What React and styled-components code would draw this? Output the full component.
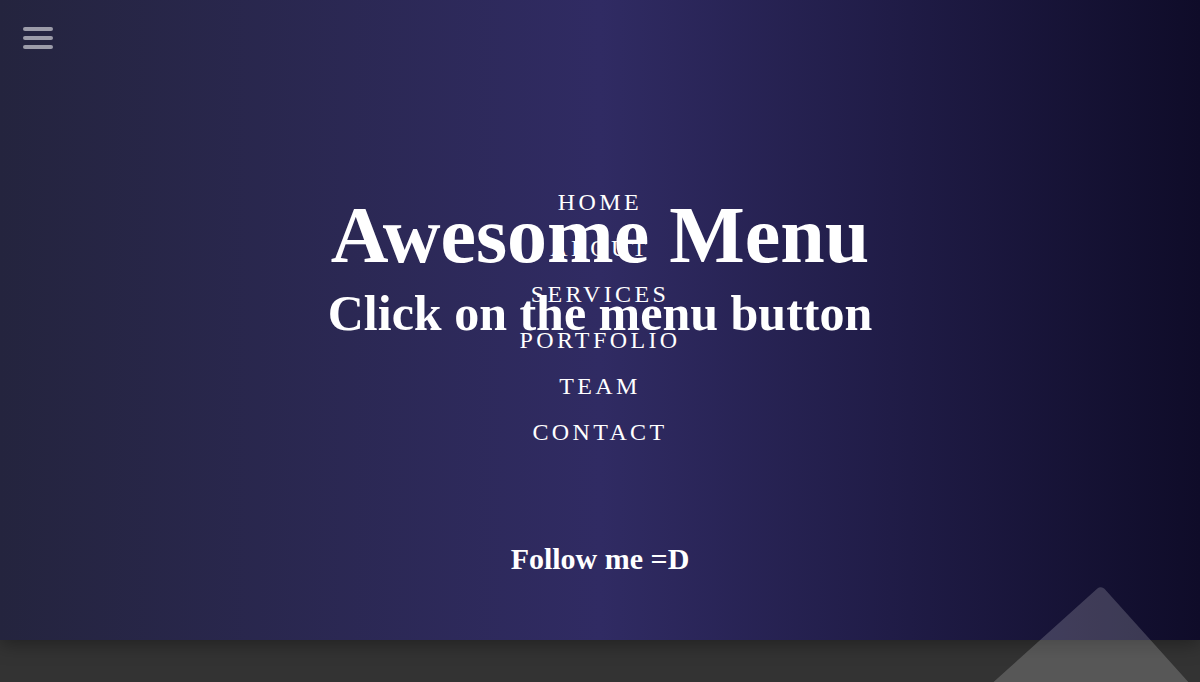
import React, { useState } from "react";
import styled, { createGlobalStyle } from "styled-components";

const GlobalStyle = createGlobalStyle`
  html, body {
    margin: 0;
    padding: 0;
    height: 100%;
    background: #333;
  }
  #root {
    height: 100%;
  }
`;

const links = ["Home", "About", "Services", "Portfolio", "Team", "Contact"];

export default function App() {
  const [open, setOpen] = useState(true);

  return (
    <Page>
      <GlobalStyle />
      <Header>
        <MenuButton aria-label="menu" onClick={() => setOpen(!open)}>
          <Bar />
          <Bar />
          <Bar />
        </MenuButton>

        {open && (
          <Overlay>
            <NavList>
              {links.map((link) => (
                <NavItem key={link}>
                  <NavLink href="#">{link}</NavLink>
                </NavItem>
              ))}
            </NavList>
          </Overlay>
        )}

        <Title>Awesome Menu</Title>
        <Subtitle>Click on the menu button</Subtitle>
        <Follow>Follow me =D</Follow>
      </Header>
      <Footer />
      <Shape />
    </Page>
  );
}

const Page = styled.div`
  position: relative;
  display: flex;
  flex-direction: column;
  min-height: 100vh;
  overflow: hidden;
  font-family: "Liberation Serif", "Times New Roman", serif;
  color: #fff;
`;

const Header = styled.header`
  position: relative;
  z-index: 1;
  display: flex;
  flex-direction: column;
  align-items: center;
  height: 640px;
  box-sizing: border-box;
  padding: 190px 0 64px;
  background: linear-gradient(to left, #0f0c29, #302b63, #24243e);
  box-shadow: 0 4px 18px rgba(0, 0, 0, 0.35);
`;

const MenuButton = styled.button`
  position: absolute;
  top: 27px;
  left: 23px;
  z-index: 3;
  display: flex;
  flex-direction: column;
  gap: 5px;
  padding: 0;
  border: none;
  background: none;
  cursor: pointer;
`;

const Bar = styled.span`
  display: block;
  width: 30px;
  height: 4px;
  border-radius: 2px;
  background: rgba(255, 255, 255, 0.55);
`;

const Overlay = styled.nav`
  position: absolute;
  inset: 0;
  display: flex;
  justify-content: center;
  padding-top: 179px;
`;

const NavList = styled.ul`
  margin: 0;
  padding: 0;
  list-style: none;
  text-align: center;
`;

const NavItem = styled.li`
  font-size: 24px;
  line-height: 46px;
`;

const NavLink = styled.a`
  color: #fff;
  letter-spacing: 3.4px;
  text-transform: uppercase;
  text-decoration: none;
`;

const Title = styled.h1`
  position: relative;
  margin: 0;
  font-size: 80px;
  font-weight: 700;
  line-height: normal;
`;

const Subtitle = styled.h2`
  position: relative;
  margin: 3px 0 0;
  font-size: 50px;
  font-weight: 700;
  line-height: normal;
`;

const Follow = styled.h3`
  margin: auto 0 0;
  font-size: 30px;
  font-weight: 700;
  line-height: normal;
`;

const Footer = styled.footer`
  flex: 1;
  background: #333;
`;

const Shape = styled.div`
  position: absolute;
  z-index: 2;
  top: 647px;
  right: -40px;
  width: 300px;
  height: 300px;
  border-radius: 5px;
  background: rgba(255, 255, 255, 0.18);
  transform: rotate(48deg);
`;
